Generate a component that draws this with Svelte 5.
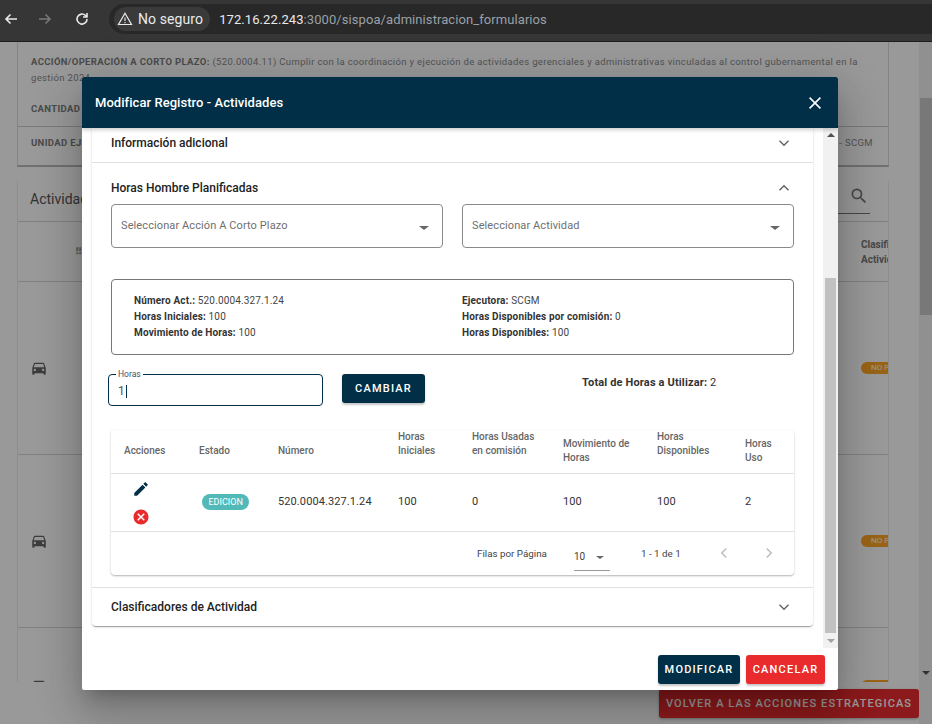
<script>
  const info = [
    [['Número Act.:', '520.0004.327.1.24'], ['Horas Iniciales:', '100'], ['Movimiento de Horas:', '100']],
    [['Ejecutora:', 'SCGM'], ['Horas Disponibles por comisión:', '0'], ['Horas Disponibles:', '100']]
  ];
</script>

<div class="screen">
  <header class="toolbar">
    <svg class="nav" viewBox="0 0 16 16"><path d="M14 8H3M7.5 3.5 3 8l4.5 4.5" fill="none" stroke="#e8eaed" stroke-width="1.6"/></svg>
    <svg class="nav fwd" viewBox="0 0 16 16"><path d="M2 8h11M8.500 3.500 13 8l-4.500 4.500" fill="none" stroke="#75787b" stroke-width="1.600"/></svg>
    <svg class="nav reload" viewBox="0 0 16 16"><path d="M13 8a5 5 0 1 1-1.500-3.500L13 6M13 2v4H9" fill="none" stroke="#e8eaed" stroke-width="1.600"/></svg>
    <div class="address">
      <div class="secure">
        <svg viewBox="0 0 16 16" class="warn"><path d="M8 2.200 14.500 13.500h-13Z" fill="none" stroke="#e8eaed" stroke-width="1.200"/><path d="M8 6.500v3.500M8 11v1.200" stroke="#e8eaed" stroke-width="1.100"/></svg>
        <span>No seguro</span>
      </div>
      <div class="url"><span>172.16.22.243</span>:3000/sispoa/administracion_formularios</div>
    </div>
  </header>

  <main class="page">
    <div class="sheet">
      <section class="summary">
        <div class="sum-block">
          <p><b>ACCIÓN/OPERACIÓN A CORTO PLAZO:</b> (520.0004.11) Cumplir con la coordinación y ejecución de actividades gerenciales y administrativas vinculadas al control gubernamental en la gestión 2024.</p>
          <p class="qty"><b>CANTIDAD</b></p>
        </div>
        <div class="sum-row"><b>UNIDAD EJECUTORA:</b><span>- SCGM</span></div>
      </section>
      <section class="table-bg">
        <div class="tb-title">
          <span class="tb-name">Actividades</span>
          <div class="tb-search">
            <svg viewBox="0 0 24 24"><path fill="#777" d="M15.500 14h-.79l-.28-.27A6.470 6.470 0 0 0 16 9.500 6.500 6.500 0 1 0 9.500 16c1.610 0 3.090-.59 4.230-1.570l.27.28v.79l5 4.990L20.490 19zm-6 0C7.010 14 5 11.990 5 9.500S7.010 5 9.500 5 14 7.010 14 9.500 11.990 14 9.500 14"/></svg>
          </div>
        </div>
        <div class="tb-head"><span class="grip">⠿</span><span class="clasif">Clasifi<br>Activid</span></div>
        {#each ['r1', 'r2', 'r3'] as row}
          <div class="tb-row {row}">
            <svg class="car" viewBox="0 0 24 24"><path fill="#666" d="M18.920 6.010C18.720 5.420 18.160 5 17.500 5h-11c-.66 0-1.210.42-1.420 1.010L3 12v8c0 .55.45 1 1 1h1c.55 0 1-.45 1-1v-1h12v1c0 .55.45 1 1 1h1c.55 0 1-.45 1-1v-8zM6.500 16c-.83 0-1.500-.67-1.500-1.500S5.670 13 6.500 13s1.500.67 1.500 1.500S7.330 16 6.500 16m11 0c-.83 0-1.500-.67-1.500-1.500s.67-1.500 1.500-1.500 1.500.67 1.500 1.500-.67 1.500-1.500 1.500M5 11l1.500-4.500h11L19 11z"/></svg>
            <span class="no-pill">NO P</span>
          </div>
        {/each}
      </section>
      <button class="back">VOLVER A LAS ACCIONES ESTRATEGICAS</button>
    </div>
    <div class="page-scroll"><div class="page-thumb"></div><i class="down"></i></div>
    <div class="overlay"></div>
  </main>

  <div class="dialog">
    <div class="dlg-head">
      <h2>Modificar Registro - Actividades</h2>
      <svg viewBox="0 0 24 24" class="close"><path d="M5.500 5.500l13 13M18.500 5.500l-13 13" stroke="#fff" stroke-width="2"/></svg>
    </div>
    <div class="dlg-body">
      <div class="scroller">
        <div class="panel">
          <div class="acc-head first">
            <span>Información adicional</span>
            <svg class="chev" viewBox="0 0 24 24"><path d="M6 9l6 6 6-6" fill="none" stroke="#666" stroke-width="2"/></svg>
          </div>
          <div class="acc-open">
            <div class="acc-head second">
              <span>Horas Hombre Planificadas</span>
              <svg class="chev" viewBox="0 0 24 24"><path d="M6 15l6-6 6 6" fill="none" stroke="#666" stroke-width="2"/></svg>
            </div>
            <div class="selects">
              <div class="select"><span>Seleccionar Acción A Corto Plazo</span><i></i></div>
              <div class="select"><span>Seleccionar Actividad</span><i></i></div>
            </div>
            <div class="infobox">
              {#each info as col}
                <div class="info-col">
                  {#each col as [k, v]}
                    <div><b>{k}</b> {v}</div>
                  {/each}
                </div>
              {/each}
            </div>
            <div class="hours-row">
              <div class="field">
                <label for="horas">Horas</label>
                <div class="val" id="horas">1<span class="caret"></span></div>
              </div>
              <button class="btn navy cambiar">CAMBIAR</button>
              <div class="total"><b>Total de Horas a Utilizar:</b> 2</div>
            </div>
            <div class="tbl-card">
              <table>
                <thead>
                  <tr>
                    <th class="c1">Acciones</th>
                    <th class="c2">Estado</th>
                    <th class="c3">Número</th>
                    <th class="c4 raised">Horas<br>Iniciales</th>
                    <th class="c5 raised">Horas Usadas<br>en comisión</th>
                    <th class="c6">Movimiento de<br>Horas</th>
                    <th class="c7 raised">Horas<br>Disponibles</th>
                    <th class="c8">Horas<br>Uso</th>
                  </tr>
                </thead>
                <tbody>
                  <tr>
                    <td class="actions">
                      <svg class="edit" viewBox="0 0 24 24"><path fill="#002f47" d="M3 17.250V21h3.750L17.810 9.940l-3.750-3.750zM20.710 7.040a1 1 0 0 0 0-1.410l-2.340-2.340a1 1 0 0 0-1.410 0l-1.830 1.830 3.750 3.750z"/></svg>
                      <svg class="del" viewBox="0 0 24 24"><path fill="#e92b2d" d="M12 2C6.470 2 2 6.470 2 12s4.470 10 10 10 10-4.470 10-10S17.530 2 12 2m5 13.590L15.590 17 12 13.410 8.410 17 7 15.590 10.590 12 7 8.410 8.410 7 12 10.590 15.590 7 17 8.410 13.410 12z"/></svg>
                    </td>
                    <td class="chip-cell"><span class="chip">EDICION</span></td>
                    <td>520.0004.327.1.24</td>
                    <td>100</td>
                    <td>0</td>
                    <td>100</td>
                    <td>100</td>
                    <td>2</td>
                  </tr>
                </tbody>
              </table>
              <div class="pager">
                <span class="fpp">Filas por Página</span>
                <span class="pp">10<i></i></span>
                <span class="range">1 - 1 de 1</span>
                <svg class="pg" viewBox="0 0 24 24"><path d="M15 6l-6 6 6 6" fill="none" stroke="#bdbdbd" stroke-width="2"/></svg>
                <svg class="pg" viewBox="0 0 24 24"><path d="M9 6l6 6-6 6" fill="none" stroke="#bdbdbd" stroke-width="2"/></svg>
              </div>
            </div>
          </div>
          <div class="acc-head last">
            <span>Clasificadores de Actividad</span>
            <svg class="chev" viewBox="0 0 24 24"><path d="M6 9l6 6 6-6" fill="none" stroke="#666" stroke-width="2"/></svg>
          </div>
        </div>
      </div>
      <div class="dlg-scroll">
        <i class="up"></i>
        <div class="track"><div class="thumb"></div></div>
        <i class="down"></i>
      </div>
    </div>
    <div class="dlg-foot">
      <button class="btn navy">MODIFICAR</button>
      <button class="btn red">CANCELAR</button>
    </div>
  </div>
</div>

<style>
  :global(body) { margin: 0; background: #fff; font-family: Roboto, "Liberation Sans", sans-serif; }
  .screen { width: 932px; height: 724px; position: relative; overflow: hidden; display: flex; flex-direction: column; }

  .toolbar { height: 42px; flex: none; background: #363636; display: flex; align-items: center; color: #e8eaed; border-bottom: 1px solid #1d1d1d; box-sizing: border-box; padding-bottom: 3px; }
  .nav { width: 16px; height: 16px; margin-left: 3px; flex: none; }
  .fwd { margin-left: 18px; }
  .reload { margin-left: 21px; }
  .address { margin-left: 19px; flex: 1; height: 30px; border-radius: 15px 0 0 15px; background: #282828; display: flex; align-items: center; padding-left: 5px; }
  .secure { background: #3a3a3a; border-radius: 12px; height: 24px; display: flex; align-items: center; padding: 0 7px 0 3px; font-size: 14px; gap: 5px; letter-spacing: 0.1px; }
  .warn { width: 16px; height: 16px; }
  .url { margin-left: 9px; font-size: 13px; color: #9aa0a6; letter-spacing: 0.08px; }
  .url span { color: #e8eaed; }

  .page { flex: 1; position: relative; background: #fff; display: flex; overflow: hidden; min-height: 0; }
  .sheet { flex: 1; min-width: 0; padding-left: 17px; position: relative; display: flex; flex-direction: column; }
  .summary { border: 1px solid #dcdcdc; border-top: none; border-bottom: 2px solid #bbb; font-size: 9.5px; color: #8a8a8a; letter-spacing: 0.35px; width: 872px; box-sizing: border-box; flex: none; }
  .summary b { color: #7c7c7c; }
  .sum-block { padding: 12px 26px 0 13px; height: 85px; box-sizing: border-box; line-height: 16px; border-bottom: 1px solid #ccc; overflow: hidden; }
  .sum-block p { margin: 0; }
  .qty { margin-top: 15px !important; }
  .sum-row { height: 38px; box-sizing: border-box; padding: 0 15px 8px 13px; display: flex; justify-content: space-between; align-items: center; }
  .table-bg { margin-top: 14px; width: 872px; height: 501px; box-sizing: border-box; border: 1px solid #ececec; border-width: 0 1px; flex: none; display: flex; flex-direction: column; overflow: hidden; }
  .tb-title { height: 41px; box-sizing: border-box; display: flex; justify-content: space-between; align-items: flex-start; padding: 0 18px 0 12px; font-size: 14px; color: #555; border-bottom: 1px solid #d5d5d5; flex: none; }
  .tb-name { margin-top: 10px; }
  .tb-search { width: 40px; border-bottom: 1px solid #777; height: 28px; box-sizing: border-box; margin-top: 5px; display: flex; align-items: flex-start; justify-content: flex-end; padding-right: 1px; }
  .tb-search svg { width: 20px; height: 20px; }
  .tb-head { height: 60px; box-sizing: border-box; flex: none; display: flex; align-items: center; justify-content: space-between; padding-left: 57px; font-size: 10px; font-weight: 700; color: #777; border-bottom: 1px solid #d5d5d5; }
  .grip { color: #999; font-size: 10px; }
  .clasif { width: 27px; white-space: nowrap; overflow: hidden; line-height: 15px; }
  .tb-row { flex: none; height: 173px; box-sizing: border-box; display: flex; align-items: center; justify-content: space-between; padding: 0 0 0 12px; border-bottom: 1px solid #d5d5d5; }
  .tb-row.r3 { height: 54px; border-bottom: none; align-items: flex-start; padding-top: 49px; }
  .tb-row.r3 .no-pill { margin-top: 3px; }
  .car { width: 18px; height: 18px; flex: none; }
  .no-pill { width: 27px; overflow: hidden; white-space: nowrap; background: #ffa726; color: #fff; font-size: 8px; line-height: 12px; padding-left: 10px; box-sizing: border-box; border-radius: 6px 0 0 6px; }
  .back { position: absolute; right: 0; bottom: 6px; width: 260px; height: 29px; border: none; background: #e92b2d; color: #fff; font: 500 11px Roboto, sans-serif; letter-spacing: 1.1px; border-radius: 3px; white-space: nowrap; padding: 0; box-shadow: 0 1px 3px rgba(0,0,0,.3); }
  .page-scroll { width: 13px; flex: none; background: #f1f1f1; position: relative; display: flex; flex-direction: column; align-items: center; }
  .page-thumb { width: 12px; height: 217px; margin-top: 56px; background: #c8c8c8; }
  .page-scroll .down { position: absolute; top: 629px; border-left: 4px solid transparent; border-right: 4px solid transparent; border-top: 4px solid #505050; }
  .overlay { position: absolute; inset: 0; background: rgba(0,0,0,.4); }

  .dialog { position: absolute; left: 82px; top: 77px; width: 756px; height: 613px; background: #fff; border-radius: 2px; display: flex; flex-direction: column; box-shadow: 0 11px 15px -7px rgba(0,0,0,.2), 0 24px 38px 3px rgba(0,0,0,.14), 0 9px 46px 8px rgba(0,0,0,.12); overflow: hidden; }
  .dlg-head { height: 51px; flex: none; background: #002f47; color: #fff; display: flex; align-items: center; justify-content: space-between; padding: 0 13px; box-shadow: 0 2px 4px rgba(0,0,0,.2); position: relative; z-index: 1; }
  .dlg-head h2 { margin: 0; font-size: 13px; font-weight: 500; letter-spacing: .05px; }
  .close { width: 20px; height: 20px; }
  .dlg-body { height: 520px; flex: none; display: flex; position: relative; }
  .scroller { flex: 1; padding: 0 10px; min-width: 0; overflow: hidden; }
  .panel { width: 721px; height: 498px; background: #fff; border-radius: 0 0 4px 4px; box-shadow: 0 2px 1px -1px rgba(0,0,0,.2), 0 1px 1px rgba(0,0,0,.14), 0 1px 3px rgba(0,0,0,.12); display: flex; flex-direction: column; }
  .acc-head { display: flex; align-items: center; justify-content: space-between; padding: 0 19px; font-size: 12px; font-weight: 500; color: #222; flex: none; }
  .acc-head.first { height: 35px; padding-bottom: 5px; box-sizing: border-box; border-bottom: 1px solid #e0e0e0; }
  .acc-head.second { height: 49px; box-sizing: border-box; }
  .acc-head.last { height: 38px; border-top: 1px solid #e0e0e0; }
  .chev { width: 18px; height: 18px; margin-right: 1px; }
  .acc-open { flex: 1; display: flex; flex-direction: column; padding: 0; min-height: 0; }
  .selects { display: flex; gap: 19px; padding: 0 19px; margin-top: -8px; }
  .select { flex: 1; height: 44px; border: 1px solid #8a8a8a; border-radius: 4px; box-sizing: border-box; display: flex; align-items: center; justify-content: space-between; padding: 0 14px 2px 9px; font-size: 11px; letter-spacing: .1px; color: #6f6f6f; }
  .select i { width: 0; height: 0; border-left: 5px solid transparent; border-right: 5px solid transparent; border-top: 4px solid #666; margin-top: 5px; margin-right: -1px; }
  .infobox { margin: 31px 19px 0; height: 76px; box-sizing: border-box; border: 1px solid #777; border-radius: 4px; display: grid; grid-template-columns: 328px 1fr; padding: 13px 22px 0; font-size: 10px; color: #444; letter-spacing: .15px; }
  .infobox b { color: #333; }
  .info-col div { line-height: 16px; }
  .hours-row { display: flex; align-items: flex-start; margin-top: 19px; padding-left: 16px; height: 32px; flex: none; }
  .field { width: 215px; height: 32px; border: 1px solid #002f47; border-radius: 4px; box-sizing: border-box; position: relative; display: flex; align-items: center; padding-left: 9px; font-size: 12px; color: #555; }
  .field label { position: absolute; left: 7px; top: -5px; background: #fff; padding: 0 2px; font-size: 8.5px; line-height: 9px; color: #37596c; }
  .val { display: flex; align-items: center; margin-top: 2px; }
  .caret { width: 1px; height: 13px; background: #002f47; margin-left: 1px; }
  .btn { border: none; border-radius: 3px; color: #fff; font: 500 11px Roboto, sans-serif; letter-spacing: 1.2px; box-shadow: 0 2px 2px rgba(0,0,0,.22); padding: 0; cursor: pointer; }
  .navy { background: #002f47; }
  .red { background: #e92b2d; }
  .cambiar { width: 83px; height: 29px; margin-left: 19px; }
  .total { margin-left: 157px; font-size: 11px; letter-spacing: .15px; color: #333; margin-top: 2px; }
  .tbl-card { margin: 24px 19px 0; height: 145px; border-radius: 4px; box-shadow: 0 1px 2px rgba(0,0,0,.3); flex: none; }
  table { border-collapse: collapse; width: 683px; table-layout: fixed; }
  th { height: 43px; padding: 0 0 0 13px; text-align: left; font-size: 10px; font-weight: 500; color: #666; line-height: 14px; box-sizing: border-box; border-bottom: 1px solid #e0e0e0; vertical-align: middle; white-space: nowrap; }
  th.raised { padding-bottom: 14px; }
  td { height: 58px; padding: 0 0 2px 13px; font-size: 11px; letter-spacing: .1px; color: #333; box-sizing: border-box; border-bottom: 1px solid #e0e0e0; }
  td.chip-cell { padding-bottom: 0; }
  .c1 { width: 75px; } .c2 { width: 79px; } .c3 { width: 120px; } .c4 { width: 74px; } .c5 { width: 91px; } .c6 { width: 94px; } .c7 { width: 88px; } .c8 { width: 62px; }
  td.actions { padding: 2px 0 0 21px; vertical-align: middle; line-height: 0; }
  .edit { width: 18px; height: 18px; display: block; }
  .del { width: 18px; height: 18px; display: block; margin-top: 10px; }
  .chip { display: inline-block; background: #52b9b9; color: #fff; font-size: 9px; line-height: 16px; padding: 0 6.5px; border-radius: 8px; margin-left: 3px; letter-spacing: 0; }
  .pager { height: 43px; display: flex; align-items: center; font-size: 9.8px; color: #444; padding-left: 366px; width: 683px; box-sizing: border-box; }
  .pager > * { flex: none; }
  .fpp { width: 70px; white-space: nowrap; }
  .pp { width: 36px; margin-left: 27px; height: 20px; margin-top: 15px; border-bottom: 1px solid #999; box-sizing: border-box; font-size: 10px; display: flex; align-items: flex-start; justify-content: space-between; line-height: 12px; }
  .pp i { width: 0; height: 0; border-left: 4px solid transparent; border-right: 4px solid transparent; border-top: 3px solid #666; margin-right: 6px; margin-top: 5px; }
  .range { margin-left: 31px; width: 74px; white-space: nowrap; }
  .pg { width: 18px; height: 18px; margin-right: 27px; }

  .dlg-scroll { width: 15px; background: #f1f1f1; flex: none; display: flex; flex-direction: column; align-items: center; }
  .dlg-scroll .up { width: 0; height: 0; margin-top: 5px; border-left: 4px solid transparent; border-right: 4px solid transparent; border-bottom: 4px solid #505050; }
  .dlg-scroll .down { width: 0; height: 0; margin-bottom: 5px; border-left: 4px solid transparent; border-right: 4px solid transparent; border-top: 4px solid #a3a3a3; }
  .track { flex: 1; width: 11px; padding-top: 141px; box-sizing: border-box; }
  .thumb { height: 355px; background: #c1c1c1; }
  .dlg-foot { flex: 1; display: flex; justify-content: flex-end; gap: 6px; padding: 7px 13px 0 0; }
  .dlg-foot .btn { height: 29px; }
  .dlg-foot .navy { width: 82px; }
  .dlg-foot .red { width: 79px; }
</style>
